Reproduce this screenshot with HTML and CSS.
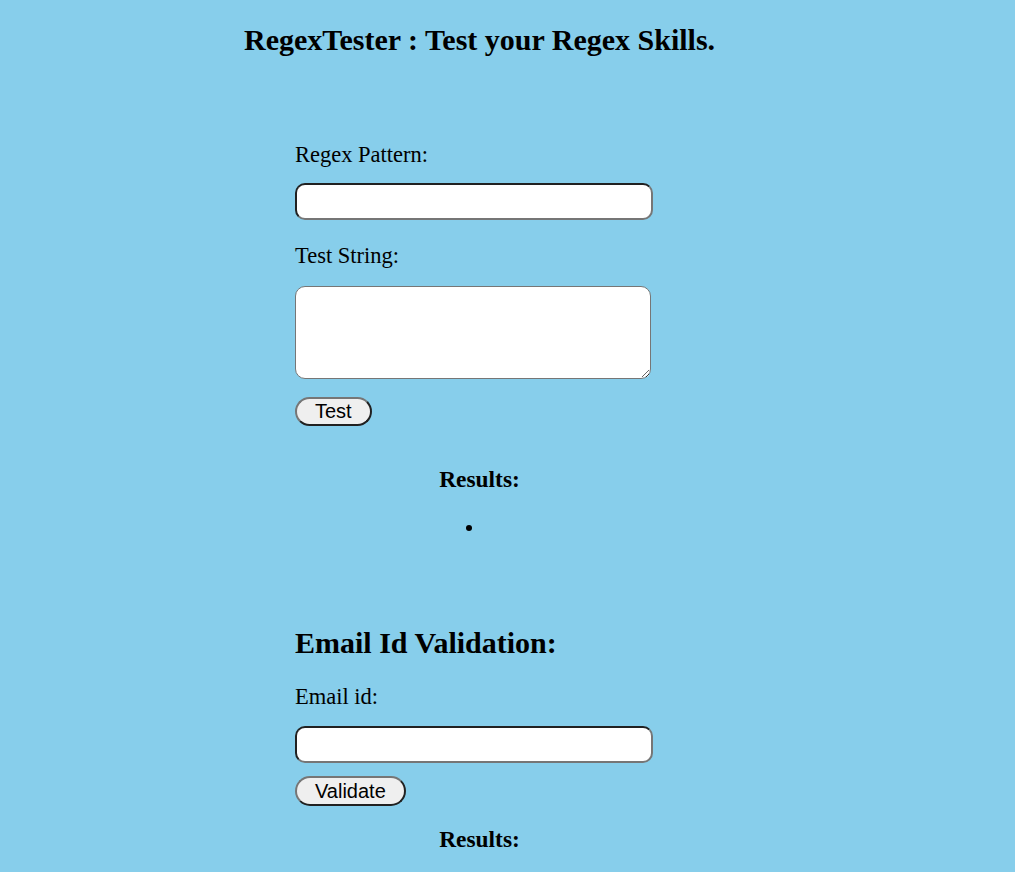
FILE: index.html
```html
<!DOCTYPE html>
<html lang="en">
<head>
<meta charset="utf-8">
<title>RegexTester</title>
<link rel="stylesheet" href="styles.css">
</head>
<body>
<div class="app">
  <h1 class="title">RegexTester : Test your Regex Skills.</h1>

  <form class="panel">
    <label class="label first" for="pattern">Regex Pattern:</label>
    <input class="field first-field" type="text" id="pattern">
    <label class="label" for="teststr">Test String:</label>
    <textarea class="area" id="teststr"></textarea>
    <button class="btn btn-test" type="button">Test</button>
  </form>

  <section class="results">
    <h3 class="results-title">Results:</h3>
    <ul class="results-list"><li></li></ul>
  </section>

  <form class="panel email">
    <h2 class="section-title">Email Id Validation:</h2>
    <label class="label" for="email">Email id:</label>
    <input class="field" type="text" id="email">
    <button class="btn btn-validate" type="button">Validate</button>
  </form>

  <section class="results results-email">
    <h3 class="results-title">Results:</h3>
  </section>
</div>
</body>
</html>
```

FILE: styles.css
```css
html, body {
  margin: 0;
  padding: 0;
}

body {
  background: #87ceeb;
  font-family: "Liberation Serif", "Times New Roman", serif;
  font-size: 20px;
  color: #000;
}

.app {
  width: 471px;
  margin-left: 244px;
  display: flex;
  flex-direction: column;
}

.title {
  margin: 23px 0 0;
  font-size: 30px;
  font-weight: bold;
  line-height: 34.5px;
  text-align: center;
  white-space: nowrap;
}

.panel {
  display: flex;
  flex-direction: column;
  align-items: flex-start;
  padding-left: 51px;
  margin: 0;
}

.label {
  display: block;
  font-size: 22.5px;
  line-height: 26px;
  margin-top: 23px;
}

.label.first {
  margin-top: 84px;
}

.field {
  box-sizing: border-box;
  width: 358px;
  height: 37px;
  margin: 16px 0 0;
  padding: 1px 8px;
  border: 2px inset #767676;
  border-radius: 10px;
  background: #fff;
  font-family: "Liberation Sans", Arial, sans-serif;
  font-size: 16px;
}

.field.first-field {
  margin-top: 15px;
}

.area {
  box-sizing: border-box;
  width: 356px;
  height: 93px;
  margin: 17px 0 0;
  padding: 2px 8px;
  border: 1px solid #767676;
  border-radius: 10px;
  background: #fff;
  font-family: "Liberation Mono", monospace;
  font-size: 13px;
}

.btn {
  box-sizing: border-box;
  height: 29px;
  padding: 0 18px;
  border: 2px outset #767676;
  border-radius: 15px;
  background: #efefef;
  font-family: "Liberation Sans", Arial, sans-serif;
  font-size: 20px;
  line-height: 23px;
  color: #000;
}

.btn-test {
  margin-top: 18px;
}

.btn-validate {
  margin-top: 13px;
  height: 30px;
}

.results {
  display: flex;
  flex-direction: column;
  align-items: center;
}

.results-title {
  margin: 40px 0 0;
  font-size: 23.4px;
  font-weight: bold;
  line-height: 27px;
}

.results-list {
  margin: 23px 0 0 219px;
  padding: 0 0 0 22px;
  line-height: 23px;
  width: 0;
  align-self: flex-start;
}

.results-list li {
  height: 23px;
}

.email .section-title {
  margin: 87px 0 0;
  font-size: 30px;
  font-weight: bold;
  line-height: 34.5px;
}

.email .label {
  margin-top: 24px;
}

.results-email .results-title {
  margin-top: 20px;
}
```
